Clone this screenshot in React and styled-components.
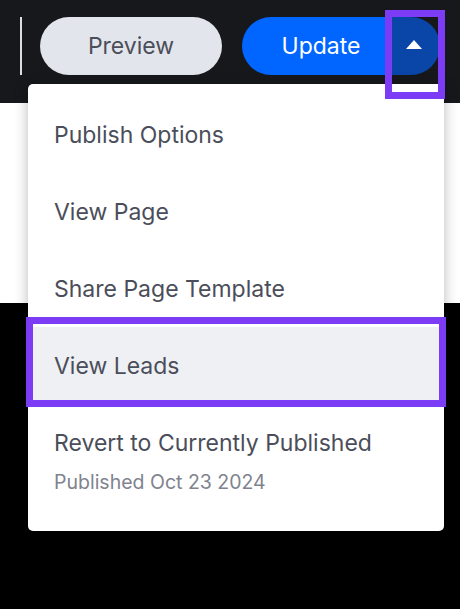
import React from 'react'
import styled, { createGlobalStyle } from 'styled-components'

const GlobalStyle = createGlobalStyle`
  html, body {
    margin: 0;
    padding: 0;
    background: #000;
  }
  body {
    font-family: Inter, "Noto Sans", sans-serif;
    -webkit-font-smoothing: antialiased;
  }
`

const items = [
  { label: 'Publish Options' },
  { label: 'View Page' },
  { label: 'Share Page Template' },
  { label: 'View Leads', active: true },
  { label: 'Revert to Currently Published', sub: 'Published Oct 23 2024' },
]

function App() {
  return (
    <>
      <GlobalStyle />
      <Page>
        <TopBar>
          <Divider />
          <PreviewButton>Preview</PreviewButton>
          <SplitButton>
            <UpdateButton>Update</UpdateButton>
            <CaretButton>
              <svg width="16" height="9" viewBox="0 0 16 9">
                <path d="M8 0 L16 9 L0 9 Z" fill="#fff" />
              </svg>
              <Marker />
            </CaretButton>
          </SplitButton>
        </TopBar>
        <WhitePanel />
        <BlackArea />

        <Menu>
          {items.map((it) => (
            <MenuItem key={it.label} active={it.active} tall={!!it.sub}>
              <ItemLabel>{it.label}</ItemLabel>
              {it.sub && <ItemSub>{it.sub}</ItemSub>}
            </MenuItem>
          ))}
        </Menu>
      </Page>
    </>
  )
}

export default App

const Page = styled.div`
  position: relative;
  width: 460px;
  height: 609px;
  overflow: hidden;
  display: flex;
  flex-direction: column;
`
const TopBar = styled.div`
  height: 103px;
  background: #17181c;
  display: flex;
  align-items: flex-start;
  padding: 17px 0 0 20px;
  box-sizing: border-box;
`
const Divider = styled.div`
  width: 2px;
  height: 58px;
  background: #dcdde3;
  margin-right: 18px;
`
const PreviewButton = styled.button`
  width: 182px;
  height: 58px;
  border: none;
  border-radius: 29px;
  background: #e3e5ec;
  color: #4b4e59;
  font-family: Inter, "Noto Sans", sans-serif;
  font-size: 23px;
  padding: 0;
  margin-right: 20px;
`
const SplitButton = styled.div`
  display: flex;
  width: 198px;
  height: 58px;
  border-radius: 29px;
`
const UpdateButton = styled.button`
  flex: 1;
  border: none;
  background: #0066ff;
  color: #fff;
  font-family: Inter, "Noto Sans", sans-serif;
  font-size: 23px;
  border-radius: 29px 0 0 29px;
  padding: 0 0 0 8px;
`
const CaretButton = styled.button`
  position: relative;
  width: 48px;
  border: none;
  background: #0a45a8;
  border-radius: 0 29px 29px 0;
  display: flex;
  align-items: center;
  justify-content: center;
  padding: 0 4px 4px 0;
`
const Marker = styled.span`
  position: absolute;
  z-index: 5;
  left: -7px;
  top: -7px;
  width: 46px;
  height: 75px;
  border: 7px solid #7c3cf5;
  pointer-events: none;
`
const WhitePanel = styled.div`
  height: 200px;
  background: #ffffff;
`
const BlackArea = styled.div`
  flex: 1;
  background: #000;
`
const Menu = styled.div`
  position: absolute;
  left: 28px;
  top: 84px;
  width: 416px;
  height: 447px;
  box-sizing: border-box;
  background: #fff;
  border-radius: 5px;
  box-shadow: 0 2px 14px rgba(0, 0, 0, 0.28);
  padding-top: 12px;
  display: flex;
  flex-direction: column;
`
const MenuItem = styled.div`
  position: relative;
  height: ${(p) => (p.tall ? 'auto' : '77px')};
  padding: ${(p) => (p.tall ? '25px 26px 0' : '0 26px')};
  display: flex;
  flex-direction: column;
  justify-content: ${(p) => (p.tall ? 'flex-start' : 'center')};
  background: ${(p) => (p.active ? '#eef0f4' : 'transparent')};

  ${(p) =>
    p.active &&
    `
    &::after {
      content: '';
      position: absolute;
      left: -2px;
      right: -2px;
      top: -10px;
      bottom: -3px;
      border: 7px solid #7c3cf5;
      pointer-events: none;
    }
  `}
`
const ItemLabel = styled.div`
  font-size: 23px;
  color: #4b4e5a;
  line-height: 28px;
`
const ItemSub = styled.div`
  font-size: 19.5px;
  color: #80838d;
  margin-top: 13px;
  line-height: 24px;
`
